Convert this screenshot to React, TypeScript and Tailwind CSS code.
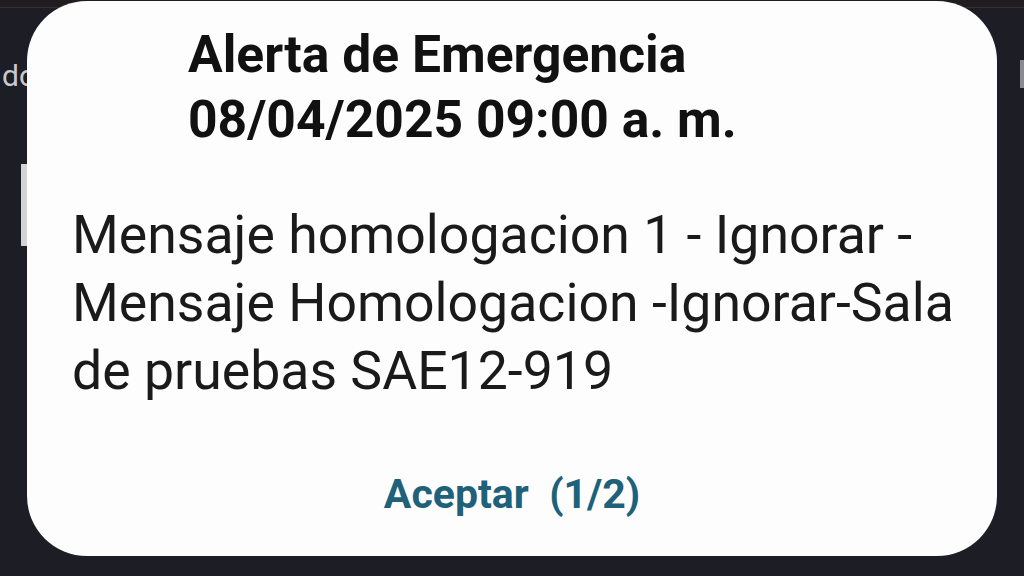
export default function App() {
  return (
    <div className="relative w-[1024px] h-[576px] overflow-hidden bg-[#1c1d25] font-['Roboto',sans-serif]">
      {/* page behind the dialog */}
      <div className="h-[8px] border-b border-[#3a2f2c] bg-[#201c20]" />
      <div className="flex justify-between pt-[50px]">
        <span className="pl-[2px] text-[30px] leading-[36px] text-[#c9c9cc]">do</span>
        <div className="w-[4px] h-[28px] mt-[2px] bg-[#8a8a90]" />
      </div>
      <div className="ml-[21px] mt-[70px] w-[8px] h-[82px] bg-[#d4d4d6]" />

      {/* dialog */}
      <div className="absolute left-[27px] top-[1px] w-[970px] h-[555px] rounded-[60px] bg-[#fdfdfe] flex flex-col">
        <div className="pl-[161px] pt-[21px] font-bold text-[51.6px] leading-[65px] text-[#111111]">
          <div>Alerta de Emergencia</div>
          <div>08/04/2025 09:00 a. m.</div>
        </div>
        <p className="pl-[45px] pr-[20px] mt-[49px] text-[53.6px] leading-[68px] text-[#1a1a1a]">
          Mensaje homologacion 1 - Ignorar -<br />
          Mensaje Homologacion -Ignorar-Sala<br />
          de pruebas SAE12-919
        </p>
        <div className="mt-[65px] flex justify-center">
          <button className="font-bold text-[41px] leading-[48px] text-[#1f6179]">
            Aceptar&nbsp;&nbsp;(1/2)
          </button>
        </div>
      </div>
    </div>
  );
}
